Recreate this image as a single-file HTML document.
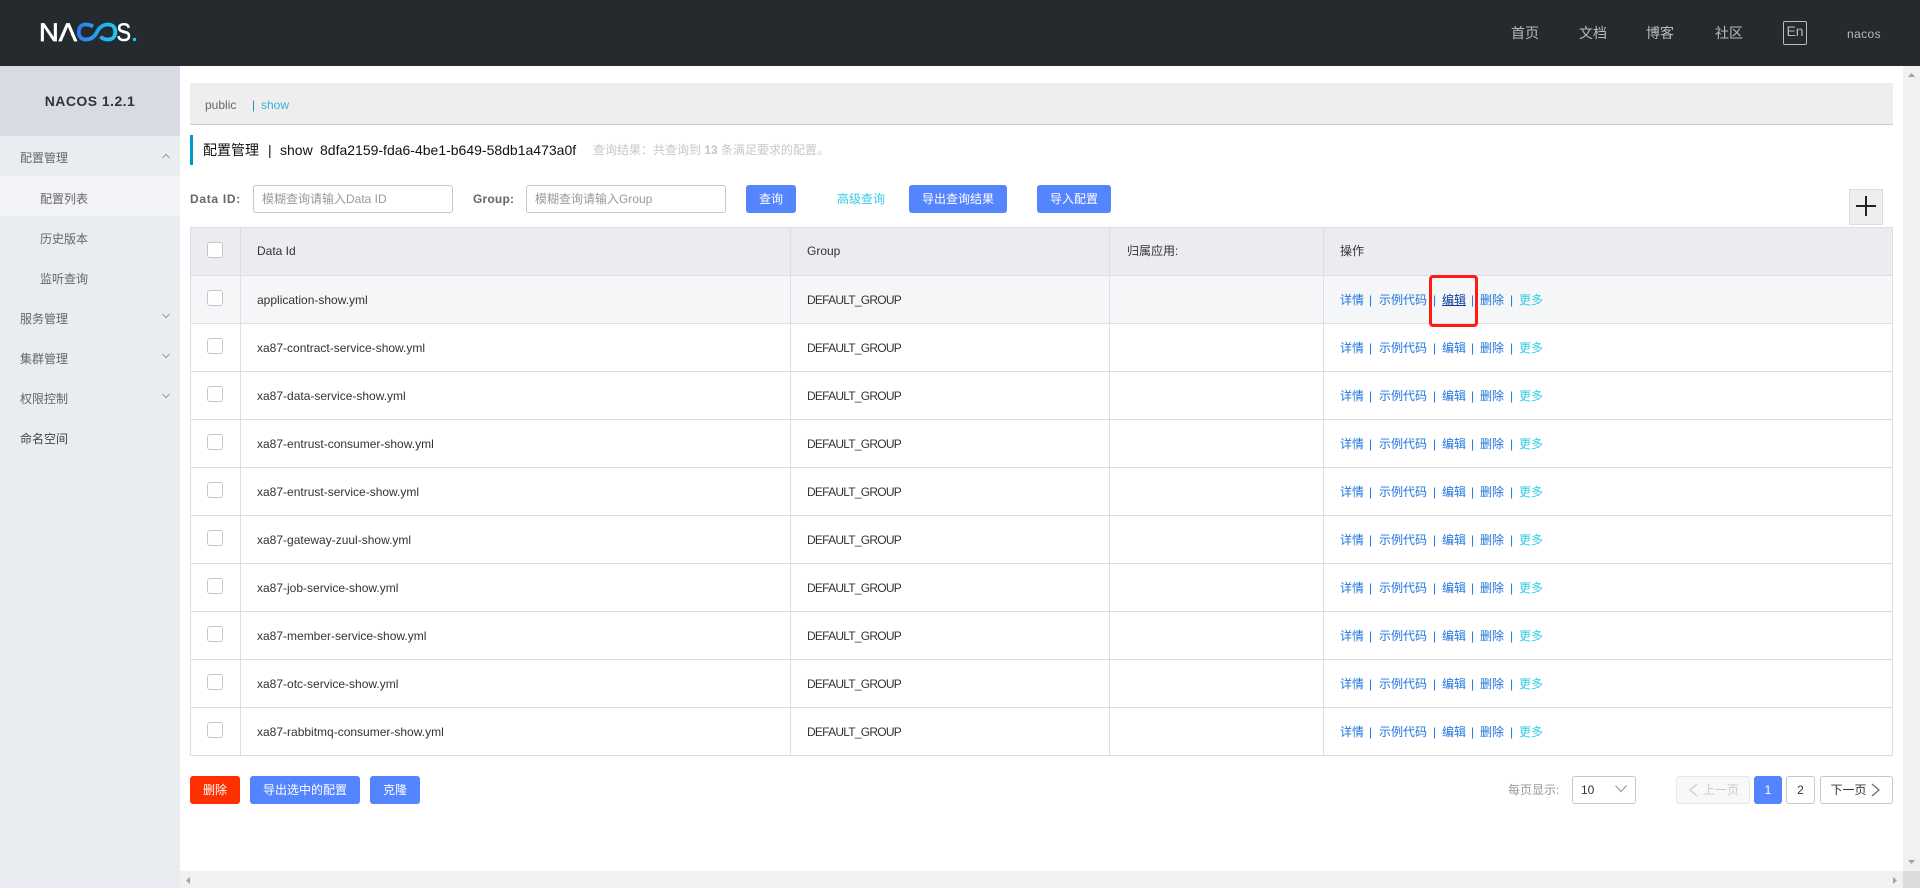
<!DOCTYPE html>
<html lang="zh-CN">
<head>
<meta charset="utf-8">
<title>Nacos 配置管理</title>
<style>
*{box-sizing:border-box}
html,body{margin:0;padding:0;width:1920px;height:888px;overflow:hidden;background:#fff;font:12px/16px "Liberation Sans","Noto Sans CJK SC",sans-serif;color:#333}
.a{position:absolute}
.t{position:absolute;white-space:nowrap;line-height:16px;height:16px}
.hn{color:#b8babc;font-size:14px;top:25px}
.mi{left:20px;color:#666}
.ms{left:40px;color:#666}
.btn{position:absolute;top:185px;height:28px;background:#5584ff;color:#fff;border-radius:3px;text-align:center;line-height:28px;white-space:nowrap}
.b2{top:776px}
.inp{position:absolute;top:185px;width:200px;height:28px;border:1px solid #c4c6cf;border-radius:3px;background:#fff;color:#999;line-height:26px;padding-left:8px;white-space:nowrap}
.r{position:absolute;left:191px;width:1701px;height:48px;border-bottom:1px solid #dcdee3;background:#fff}
.r .t{top:16px}
.cb{position:absolute;left:16px;top:14px;width:16px;height:16px;border:1px solid #c4c6cf;border-radius:3px;background:#fff}
.c1{left:66px}.c2{left:616px;letter-spacing:-.75px}.c3{left:935px}.c4{left:1149px}
.k{color:#1f74dd}.m{color:#33cde5}
.a1{left:1149px}.s1{left:1178px}.a2{left:1188px}.s2{left:1242px}.a3{left:1251px}.s3{left:1280px}.a4{left:1289px}.s4{left:1319px}.a5{left:1328px}
.s1,.s2,.s3,.s4{color:#1f74dd}
.v{position:absolute;top:227px;width:1px;height:529px;background:#dcdee3}
.pg{position:absolute;top:776px;height:28px;border:1px solid #c4c6cf;border-radius:3px;background:#fff;text-align:center;line-height:26px}
</style>
</head>
<body>
<!-- header -->
<div class="a" style="left:0;top:0;width:1920px;height:66px;background:#252a2f"></div>
<svg class="a" style="left:0;top:0" width="160" height="66" viewBox="0 0 160 66">
<defs><linearGradient id="g" x1="77" x2="117" y1="0" y2="0" gradientUnits="userSpaceOnUse"><stop offset="0" stop-color="#2f79ee"/><stop offset="1" stop-color="#1bcdf5"/></linearGradient></defs>
<text x="39" y="41" font-family="Liberation Sans" font-size="25" fill="#fff" stroke="#fff" stroke-width=".7" textLength="38" lengthAdjust="spacingAndGlyphs">NA</text>
<polygon points="63.600,37.500 72.200,37.500 70.200,32.500 65.600,32.500" fill="#252a2f"/>
<path d="M93 26.500C90.500 24.800 88 24.500 85.500 24.500C81 24.500 78.800 27.800 78.800 32C78.800 36.200 81 39.500 86 39.500C92 39.500 95 36 97 32C99 28 102 24.500 108 24.500C113 24.500 115.300 27.800 115.300 32C115.300 36.200 113 39.500 108 39.500C104.500 39.500 102 38.300 100.500 36.500" fill="none" stroke="url(#g)" stroke-width="3.800"/>
<text x="116.500" y="41" font-family="Liberation Sans" font-size="25" fill="#fff" stroke="#fff" stroke-width=".6" textLength="14.500" lengthAdjust="spacingAndGlyphs">S</text>
<circle cx="134.500" cy="39.500" r="1.700" fill="#1bcdf5"/>
</svg>
<div class="t hn" style="left:1511px">首页</div>
<div class="t hn" style="left:1579px">文档</div>
<div class="t hn" style="left:1646px">博客</div>
<div class="t hn" style="left:1715px">社区</div>
<div class="a" style="left:1783px;top:21px;width:24px;height:24px;border:1px solid #b8babc;border-radius:2px;color:#b8babc;font-size:14px;line-height:18px;text-align:center">En</div>
<div class="t" style="left:1847px;top:26px;color:#b8babc;font-size:12px;letter-spacing:.4px">nacos</div>

<!-- sidebar -->
<div class="a" style="left:0;top:66px;width:180px;height:822px;background:#e9ecf1"></div>
<div class="a" style="left:0;top:66px;width:180px;height:70px;background:#d7dce4"></div>
<div class="t" style="left:0;width:180px;top:93px;text-align:center;font-size:14px;font-weight:bold;color:#333;letter-spacing:.45px">NACOS 1.2.1</div>
<div class="a" style="left:0;top:176px;width:180px;height:40px;background:#f2f3f7"></div>
<div class="t mi" style="top:150px">配置管理</div>
<div class="t ms" style="top:191px">配置列表</div>
<div class="t ms" style="top:231px">历史版本</div>
<div class="t ms" style="top:271px">监听查询</div>
<div class="t mi" style="top:311px">服务管理</div>
<div class="t mi" style="top:351px">集群管理</div>
<div class="t mi" style="top:391px">权限控制</div>
<div class="t mi" style="top:431px;color:#444">命名空间</div>
<svg class="a" style="left:161px;top:152px" width="10" height="8"><path d="M1.500 6L5 2.500 8.500 6" fill="none" stroke="#999"/></svg>
<svg class="a" style="left:161px;top:312px" width="10" height="8"><path d="M1.500 2L5 5.500 8.500 2" fill="none" stroke="#999"/></svg>
<svg class="a" style="left:161px;top:352px" width="10" height="8"><path d="M1.500 2L5 5.500 8.500 2" fill="none" stroke="#999"/></svg>
<svg class="a" style="left:161px;top:392px" width="10" height="8"><path d="M1.500 2L5 5.500 8.500 2" fill="none" stroke="#999"/></svg>

<!-- breadcrumb -->
<div class="a" style="left:190px;top:83px;width:1703px;height:42px;background:#eee;border-bottom:1px solid #ccc"></div>
<div class="t" style="left:205px;top:97px;color:#666">public</div>
<div class="t" style="left:252px;top:97px;color:#1a8fc0">|</div>
<div class="t" style="left:261px;top:97px;color:#33b5d5">show</div>

<!-- title -->
<div class="a" style="left:190px;top:135px;width:3px;height:30px;background:#09c"></div>
<div class="t" style="left:203px;top:142px;font-size:14px;color:#111">配置管理</div>
<div class="t" style="left:268px;top:142px;font-size:14px;color:#111">|</div>
<div class="t" style="left:280px;top:142px;font-size:14px;color:#111">show</div>
<div class="t" style="left:320px;top:142px;font-size:14px;color:#111">8dfa2159-fda6-4be1-b649-58db1a473a0f</div>
<div class="t" style="left:593px;top:142px;color:#c7c7c7">查询结果：共查询到 <b>13</b> 条满足要求的配置。</div>

<!-- search -->
<div class="t" style="left:190px;top:191px;font-weight:bold;color:#666;letter-spacing:.7px">Data ID:</div>
<div class="inp" style="left:253px">模糊查询请输入Data ID</div>
<div class="t" style="left:473px;top:191px;font-weight:bold;color:#666;letter-spacing:.2px">Group:</div>
<div class="inp" style="left:526px">模糊查询请输入Group</div>
<div class="btn" style="left:746px;width:50px">查询</div>
<div class="t" style="left:837px;top:191px;color:#33cde5">高级查询</div>
<div class="btn" style="left:909px;width:98px">导出查询结果</div>
<div class="btn" style="left:1037px;width:74px">导入配置</div>
<div class="a" style="left:1849px;top:189px;width:34px;height:36px;background:#eee;border:1px solid #ddd"></div>
<div class="a" style="left:1856px;top:205px;width:20px;height:2px;background:#222"></div>
<div class="a" style="left:1865px;top:196px;width:2px;height:20px;background:#222"></div>

<!-- table -->
<div class="a" style="left:190px;top:227px;width:1703px;height:49px;background:#ebecf0;border-top:1px solid #dcdee3;border-bottom:1px solid #dcdee3"></div>
<div class="a" style="left:207px;top:242px;width:16px;height:16px;border:1px solid #c4c6cf;border-radius:3px;background:#fff"></div>
<div class="t" style="left:257px;top:243px">Data Id</div>
<div class="t" style="left:807px;top:243px">Group</div>
<div class="t" style="left:1127px;top:243px">归属应用:</div>
<div class="t" style="left:1340px;top:243px">操作</div>

<div class="r" style="top:276px;background:#f4f6f8"><div class="cb"></div><div class="t c1">application-show.yml</div><div class="t c2">DEFAULT_GROUP</div><div class="t k a1">详情</div><div class="t s1">|</div><div class="t k a2">示例代码</div><div class="t s2">|</div><div class="t a3" style="color:#0b3a9a;text-decoration:underline">编辑</div><div class="t s3">|</div><div class="t k a4">删除</div><div class="t s4">|</div><div class="t m a5">更多</div></div>
<div class="r" style="top:324px"><div class="cb"></div><div class="t c1">xa87-contract-service-show.yml</div><div class="t c2">DEFAULT_GROUP</div><div class="t k a1">详情</div><div class="t s1">|</div><div class="t k a2">示例代码</div><div class="t s2">|</div><div class="t k a3">编辑</div><div class="t s3">|</div><div class="t k a4">删除</div><div class="t s4">|</div><div class="t m a5">更多</div></div>
<div class="r" style="top:372px"><div class="cb"></div><div class="t c1">xa87-data-service-show.yml</div><div class="t c2">DEFAULT_GROUP</div><div class="t k a1">详情</div><div class="t s1">|</div><div class="t k a2">示例代码</div><div class="t s2">|</div><div class="t k a3">编辑</div><div class="t s3">|</div><div class="t k a4">删除</div><div class="t s4">|</div><div class="t m a5">更多</div></div>
<div class="r" style="top:420px"><div class="cb"></div><div class="t c1">xa87-entrust-consumer-show.yml</div><div class="t c2">DEFAULT_GROUP</div><div class="t k a1">详情</div><div class="t s1">|</div><div class="t k a2">示例代码</div><div class="t s2">|</div><div class="t k a3">编辑</div><div class="t s3">|</div><div class="t k a4">删除</div><div class="t s4">|</div><div class="t m a5">更多</div></div>
<div class="r" style="top:468px"><div class="cb"></div><div class="t c1">xa87-entrust-service-show.yml</div><div class="t c2">DEFAULT_GROUP</div><div class="t k a1">详情</div><div class="t s1">|</div><div class="t k a2">示例代码</div><div class="t s2">|</div><div class="t k a3">编辑</div><div class="t s3">|</div><div class="t k a4">删除</div><div class="t s4">|</div><div class="t m a5">更多</div></div>
<div class="r" style="top:516px"><div class="cb"></div><div class="t c1">xa87-gateway-zuul-show.yml</div><div class="t c2">DEFAULT_GROUP</div><div class="t k a1">详情</div><div class="t s1">|</div><div class="t k a2">示例代码</div><div class="t s2">|</div><div class="t k a3">编辑</div><div class="t s3">|</div><div class="t k a4">删除</div><div class="t s4">|</div><div class="t m a5">更多</div></div>
<div class="r" style="top:564px"><div class="cb"></div><div class="t c1">xa87-job-service-show.yml</div><div class="t c2">DEFAULT_GROUP</div><div class="t k a1">详情</div><div class="t s1">|</div><div class="t k a2">示例代码</div><div class="t s2">|</div><div class="t k a3">编辑</div><div class="t s3">|</div><div class="t k a4">删除</div><div class="t s4">|</div><div class="t m a5">更多</div></div>
<div class="r" style="top:612px"><div class="cb"></div><div class="t c1">xa87-member-service-show.yml</div><div class="t c2">DEFAULT_GROUP</div><div class="t k a1">详情</div><div class="t s1">|</div><div class="t k a2">示例代码</div><div class="t s2">|</div><div class="t k a3">编辑</div><div class="t s3">|</div><div class="t k a4">删除</div><div class="t s4">|</div><div class="t m a5">更多</div></div>
<div class="r" style="top:660px"><div class="cb"></div><div class="t c1">xa87-otc-service-show.yml</div><div class="t c2">DEFAULT_GROUP</div><div class="t k a1">详情</div><div class="t s1">|</div><div class="t k a2">示例代码</div><div class="t s2">|</div><div class="t k a3">编辑</div><div class="t s3">|</div><div class="t k a4">删除</div><div class="t s4">|</div><div class="t m a5">更多</div></div>
<div class="r" style="top:708px"><div class="cb"></div><div class="t c1">xa87-rabbitmq-consumer-show.yml</div><div class="t c2">DEFAULT_GROUP</div><div class="t k a1">详情</div><div class="t s1">|</div><div class="t k a2">示例代码</div><div class="t s2">|</div><div class="t k a3">编辑</div><div class="t s3">|</div><div class="t k a4">删除</div><div class="t s4">|</div><div class="t m a5">更多</div></div>

<div class="v" style="left:190px"></div>
<div class="v" style="left:240px"></div>
<div class="v" style="left:790px"></div>
<div class="v" style="left:1109px"></div>
<div class="v" style="left:1323px"></div>
<div class="v" style="left:1892px"></div>

<!-- red highlight -->
<div class="a" style="left:1429px;top:275px;width:49px;height:52px;border:3px solid #ff1a12;border-radius:4px"></div>

<!-- bottom -->
<div class="btn b2" style="left:190px;width:50px;background:#ff3000">删除</div>
<div class="btn b2" style="left:250px;width:110px">导出选中的配置</div>
<div class="btn b2" style="left:370px;width:50px">克隆</div>

<div class="t" style="left:1508px;top:782px;color:#999">每页显示:</div>
<div class="pg" style="left:1572px;width:64px;text-align:left;padding-left:8px">10</div>
<svg class="a" style="left:1614px;top:784px" width="14" height="10"><path d="M1.500 1.500L7 7.500 12.500 1.500" fill="none" stroke="#999" stroke-width="1.100"/></svg>
<div class="pg" style="left:1676px;width:74px;background:#f7f8fa;border-color:#e6e7eb;color:#ccc;padding-left:16px">上一页</div>
<svg class="a" style="left:1688px;top:782px" width="10" height="16"><path d="M9 2L2 8 9 14" fill="none" stroke="#ccc" stroke-width="1.200"/></svg>
<div class="pg" style="left:1754px;width:28px;background:#5584ff;border-color:#5584ff;color:#fff">1</div>
<div class="pg" style="left:1786px;width:29px">2</div>
<div class="pg" style="left:1820px;width:73px;padding-right:16px">下一页</div>
<svg class="a" style="left:1871px;top:782px" width="10" height="16"><path d="M1 2L8 8 1 14" fill="none" stroke="#666" stroke-width="1.200"/></svg>

<!-- scrollbars -->
<div class="a" style="left:1903px;top:66px;width:17px;height:805px;background:#f1f1f1"></div>
<div class="a" style="left:180px;top:871px;width:1723px;height:17px;background:#f1f1f1"></div>
<div class="a" style="left:1903px;top:871px;width:17px;height:17px;background:#dcdcdc"></div>
<svg class="a" style="left:1907px;top:72px" width="9" height="6"><path d="M4.500 1L8 5H1z" fill="#a3a3a3"/></svg>
<svg class="a" style="left:1907px;top:859px" width="9" height="6"><path d="M4.500 5L8 1H1z" fill="#a3a3a3"/></svg>
<svg class="a" style="left:185px;top:876px" width="6" height="9"><path d="M1 4.500L5 1V8z" fill="#a3a3a3"/></svg>
<svg class="a" style="left:1892px;top:876px" width="6" height="9"><path d="M5 4.500L1 1V8z" fill="#a3a3a3"/></svg>
</body>
</html>
